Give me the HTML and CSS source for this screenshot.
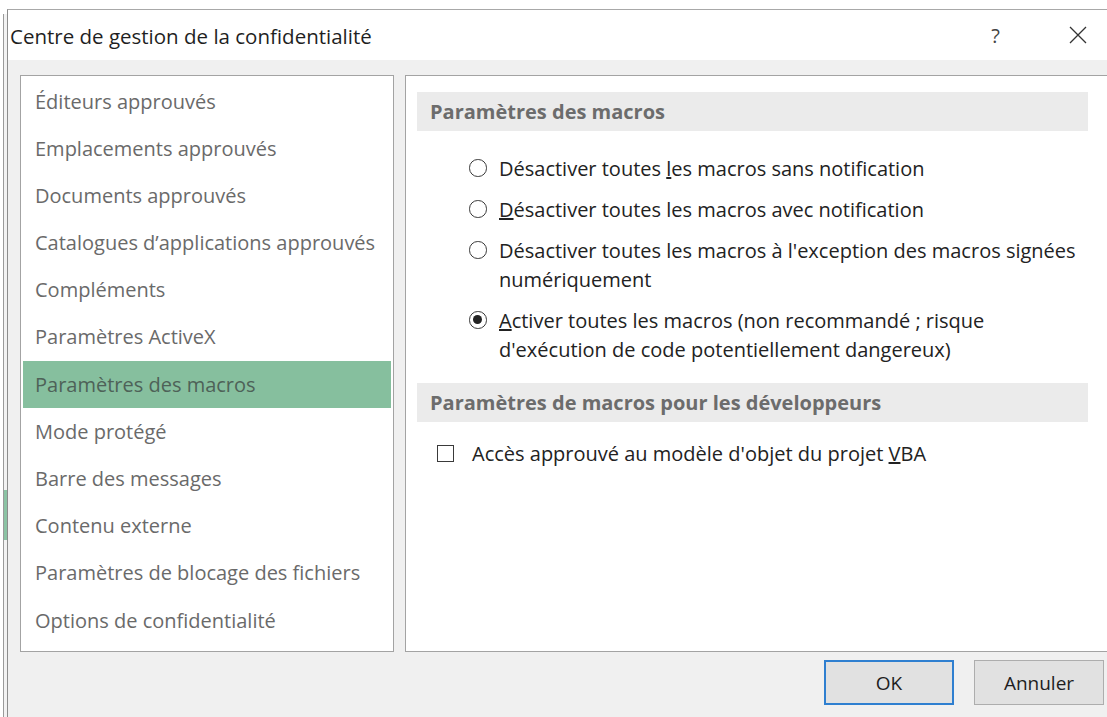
FILE: index.html
```html
<!DOCTYPE html>
<html lang="fr">
<head>
<meta charset="utf-8">
<title>Centre de gestion de la confidentialité</title>
<link rel="stylesheet" href="styles.css">
</head>
<body>
<div class="desk">
  <div class="dialog">
    <div class="titlebar">
      <span class="title">Centre de gestion de la confidentialité</span>
      <span class="help">?</span>
      <svg class="close" width="18" height="18" viewBox="0 0 18 18"><path d="M1 1 L17 17 M17 1 L1 17" stroke="#333" stroke-width="1.3" fill="none"/></svg>
    </div>
    <div class="body">
      <div class="panes">
        <ul class="nav">
          <li>Éditeurs approuvés</li>
          <li>Emplacements approuvés</li>
          <li>Documents approuvés</li>
          <li>Catalogues d’applications approuvés</li>
          <li>Compléments</li>
          <li>Paramètres ActiveX</li>
          <li class="active">Paramètres des macros</li>
          <li>Mode protégé</li>
          <li>Barre des messages</li>
          <li>Contenu externe</li>
          <li>Paramètres de blocage des fichiers</li>
          <li>Options de confidentialité</li>
        </ul>
        <div class="settings">
          <div class="section-head">Paramètres des macros</div>
          <div class="radios">
            <label class="opt"><span class="radio"></span><span class="txt">Désactiver toutes <u>l</u>es macros sans notification</span></label>
            <label class="opt"><span class="radio"></span><span class="txt"><u>D</u>ésactiver toutes les macros avec notification</span></label>
            <label class="opt"><span class="radio"></span><span class="txt">Désactiver toutes les macros à l'exception des macros si<u>g</u>nées<br>numériquement</span></label>
            <label class="opt"><span class="radio on"></span><span class="txt"><u>A</u>ctiver toutes les macros (non recommandé ; risque<br>d'exécution de code potentiellement dangereux)</span></label>
          </div>
          <div class="section-head">Paramètres de macros pour les développeurs</div>
          <label class="check"><span class="box"></span><span class="txt">Accès approuvé au modèle d'objet du projet <u>V</u>BA</span></label>
        </div>
      </div>
      <div class="footer">
        <button class="btn default">OK</button>
        <button class="btn">Annuler</button>
      </div>
    </div>
  </div>
</div>
</body>
</html>
```

FILE: styles.css
```css
html, body {
  margin: 0;
  padding: 0;
  background: #ffffff;
  overflow: hidden;
}

/* window behind the dialog: a thin frame line and a green sliver near the left edge */
.desk {
  width: 1107px;
  height: 717px;
  padding: 9px 0 0 7px;
  box-sizing: border-box;
  background:
    linear-gradient(#8cc3a4, #8cc3a4) 4px 490px / 3px 50px no-repeat,
    linear-gradient(#ffffff, #ffffff) 0 0 / 100% 14px no-repeat,
    linear-gradient(to right, #fff 0, #fff 3px, #9a9a9a 3px, #9a9a9a 4px, #f2f2f2 4px);
  font-family: "Open Sans", "Noto Sans", sans-serif;
}

.dialog {
  width: 1120px;
  height: 720px;
  border-left: 1px solid #8c8c8c;
  border-top: 1px solid #a8a8a8;
  background: #f0f0f0;
  display: flex;
  flex-direction: column;
}

.titlebar {
  height: 50px;
  background: #ffffff;
  display: flex;
  align-items: center;
  padding-left: 2px;
  color: #1f1f1f;
}

.title {
  font-size: 20.5px;
  flex: 1;
  padding-top: 2px;
}

.help {
  font-size: 20px;
  color: #444;
  margin-right: 69px;
}

.close {
  margin-right: 41px;
}

.body {
  flex: 1;
  padding: 15px 0 0 12px;
}

.panes {
  display: flex;
  gap: 11px;
  height: 577px;
}

/* category list */
.nav {
  list-style: none;
  margin: 0;
  padding: 1.5px 2px 0 2px;
  width: 368px;
  background: #ffffff;
  border: 1px solid #a3a3a3;
  box-sizing: content-box;
  height: 573.5px;
}

.nav li {
  height: 47.2px;
  line-height: 47px;
  padding-left: 12px;
  font-size: 20px;
  color: #6a6a6a;
  white-space: nowrap;
}

.nav li.active {
  background: #86bf9e;
  color: #4e6258;
}

/* settings page */
.settings {
  flex: 1;
  background: #ffffff;
  border: 1px solid #a3a3a3;
  border-right: none;
  padding: 16px 0 0 11px;
}

.section-head {
  width: 658px;
  height: 39px;
  line-height: 39px;
  background: #ebebeb;
  padding-left: 13px;
  font-weight: 700;
  font-size: 20px;
  color: #6c6c6c;
  white-space: nowrap;
}

.radios {
  padding: 23px 0 18.5px 52px;
  display: flex;
  flex-direction: column;
  gap: 12px;
}

.opt {
  display: flex;
  align-items: flex-start;
  font-size: 20px;
  color: #222;
  line-height: 29px;
  white-space: nowrap;
}

.radio {
  width: 15.5px;
  height: 15.5px;
  border: 1.5px solid #3a3a3a;
  border-radius: 50%;
  margin: 5px 12.5px 0 0;
  flex: none;
  display: flex;
  align-items: center;
  justify-content: center;
}

.radio.on::after {
  content: "";
  width: 9px;
  height: 9px;
  border-radius: 50%;
  background: #222;
}

.check {
  display: flex;
  align-items: center;
  padding: 18px 0 0 20px;
  font-size: 20px;
  color: #222;
  white-space: nowrap;
}

.box {
  width: 15px;
  height: 15px;
  border: 1.5px solid #3a3a3a;
  margin-right: 18px;
  background: #fff;
  flex: none;
}

.footer {
  display: flex;
  gap: 20px;
  padding: 8px 0 0 804px;
}

.btn {
  width: 130px;
  height: 45px;
  background: #e1e1e1;
  border: 1px solid #adadad;
  font-family: inherit;
  font-size: 19px;
  color: #1e1e1e;
  padding: 0;
}

.btn.default {
  border: 2px solid #2f7fd0;
}
```
